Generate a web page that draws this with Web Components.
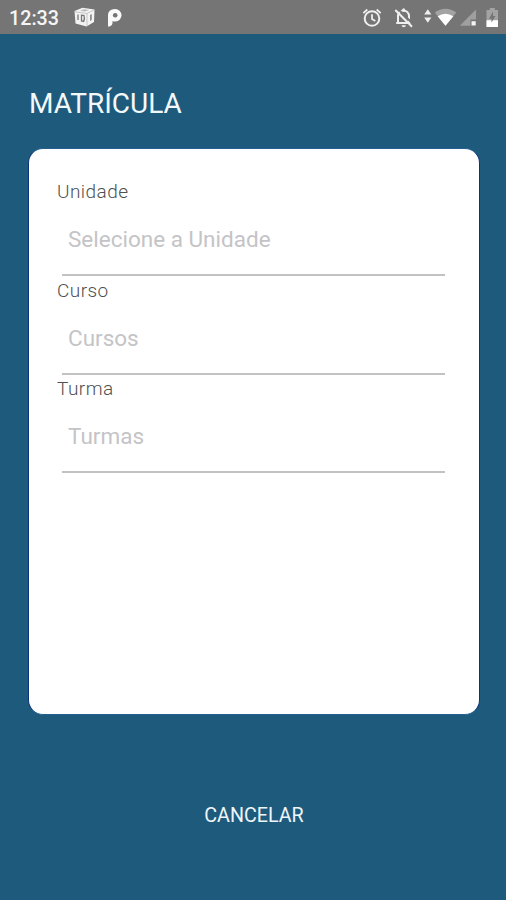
<!DOCTYPE html>
<html lang="pt-BR">
<head>
<meta charset="utf-8">
<title>Matrícula</title>
<style>
body{margin:0;background:#1e5a7c;font-family:Roboto,"Liberation Sans",sans-serif}
</style>
</head>
<body>
<enroll-screen></enroll-screen>
<script>
const define=(name,html)=>{
  const t=document.createElement('template');
  t.innerHTML=html;
  customElements.define(name,class extends HTMLElement{
    constructor(){super();this.attachShadow({mode:'open'}).append(t.content.cloneNode(true));}
  });
};

define('status-bar',`
<style>
:host{display:flex;box-sizing:border-box;height:34px;background:#757575;color:#f5f5f5;align-items:flex-start}
time{width:64px;padding-left:9px;font-size:19.700px;line-height:24px;padding-top:7px;font-weight:500;white-space:nowrap}
svg{display:block;height:34px;flex:none}
.gap{flex:1}
</style>
<time>12:33</time>
<svg width="27" viewBox="73 0 27 34"><path d="M74.500 11l8-3.200 12 1.700-.5 12.500-7.500 4.500-11-3z" fill="#f3f3f3"/><path d="M75 11.800l12 1.700 7-3.500M87 13.500v12.500" fill="none" stroke="#b5b5b5" stroke-width=".7"/><path d="M80 10.700l4-1.500 5 .8-4 1.600z" fill="#bbb"/><path d="M78 14.500v5.500M81.500 15.200l2.500.4q1 3-.3 5.800l-2.200-.4z" fill="none" stroke="#777" stroke-width="1.300"/><path d="M90 15v6l1.800-1.200v-5.800z" fill="#8d8d8d"/></svg>
<svg width="26" viewBox="100 0 26 34"><path d="M108 26.500V15.500q0-6.500 7-6.500a6.300 6.300 0 0 1 .5 12.600q-2 .1-3-.6v2.300q0 2.500-2.800 3.200z" fill="#fafafa"/><circle cx="115.200" cy="15.300" r="2.300" fill="#757575"/></svg>
<span class="gap"></span>
<svg width="28" viewBox="358 0 28 34"><circle cx="372" cy="18.500" r="7.300" fill="none" stroke="#efefef" stroke-width="2"/><path d="M372 14.300v4.700l3.300 2M363.300 13.100l4-3.600M380.700 13.100l-4-3.600" fill="none" stroke="#efefef" stroke-width="1.800"/></svg>
<svg width="36" viewBox="386 0 36 34"><path d="M398 22.500v-6.500a5.500 5.500 0 0 1 11 0v6.500M396.200 23h14.300" fill="none" stroke="#efefef" stroke-width="2"/><path d="M402.300 9.700q0-1.500 1.400-1.500t1.400 1.500v2h-2.800zM401.500 25.200h4.500q-.4 2-2.200 2t-2.300-2z" fill="#efefef"/><path d="M396 9.500l17 17" stroke="#757575" stroke-width="2" transform="translate(1.300 -1.300)"/><path d="M395.300 10l16.700 16.700" stroke="#efefef" stroke-width="2"/></svg>
<svg width="12" viewBox="422 0 12 34"><path d="M427.800 9.200l3.600 5.300h-7.200zM427.800 22.700l3.600-5.300h-7.200z" fill="#efefef"/></svg>
<svg width="24" viewBox="434 0 24 34"><path d="M434.800 12.600q10.700-7.500 21.400 0l-10.700 13.200z" fill="#a3a3a3"/><path d="M437.600 16.300q7.900-5.300 15.800 0l-7.900 9.500z" fill="#fff"/></svg>
<svg width="22" viewBox="458 0 22 34"><path d="M476 9.500v10h-5.500v6.200h-10.700z" fill="#9f9f9f"/><path d="M471.500 21.200h4.200v4.300h-4.200z" fill="#f3f3f3"/></svg>
<svg width="26" viewBox="480 0 26 34"><path d="M489.800 8h5v2h3.200v17h-11.500v-17h3.300z" fill="#a3a3a3"/><path d="M486.500 20.200h11.500v6.800h-11.500z" fill="#fff"/><path d="M493 11.500l-4 7.300h2.500v3.700l4-6.500h-2.500z" fill="#757575"/></svg>
`);

define('page-title',`
<style>
:host{display:block}
h1{margin:0;font-size:28px;font-weight:400;line-height:32px;color:#f3f8fb;white-space:nowrap}
</style><h1><slot></slot></h1>`);

define('form-card',`
<style>
:host{display:flex;flex-direction:column;box-sizing:border-box;height:567px;padding:31px 34px 0 28px;background:#fff;border:1px solid #235f91;border-left-color:#0b327a;border-right-color:#0b327a;border-radius:15px}
</style><slot></slot>`);

define('select-field',`
<style>
:host{display:block;height:98.500px}
.label{height:24px;line-height:23px;font-size:19px;color:#505050;font-weight:300;white-space:nowrap;letter-spacing:.45px}
.value{margin-left:5px;padding-left:6px;line-height:71px;height:70px;font-size:22.500px;color:#c4c4c7;border-bottom:2px solid #c2c2c2;white-space:nowrap}
</style>
<div class="label"><slot name="label"></slot></div>
<div class="value"><slot></slot></div>`);

define('text-button',`
<style>
:host{display:block}
button{display:block;border:0;padding:0;background:none;color:#eef5fa;font:400 19.700px/24px Roboto,sans-serif;white-space:nowrap}
</style><button><slot></slot></button>`);

define('enroll-screen',`
<style>
:host{display:flex;flex-direction:column;height:900px;background:#1e5a7c}
main{display:flex;flex-direction:column;padding:54px 26px 0 28px}
page-title{height:60px;padding-left:1px}
text-button{align-self:center;margin-top:89px}
</style>
<status-bar></status-bar>
<main>
<page-title>MATRÍCULA</page-title>
<form-card>
<select-field><span slot="label">Unidade</span>Selecione a Unidade</select-field>
<select-field><span slot="label">Curso</span>Cursos</select-field>
<select-field><span slot="label">Turma</span>Turmas</select-field>
</form-card>
<text-button>CANCELAR</text-button>
</main>`);
</script>
</body>
</html>
